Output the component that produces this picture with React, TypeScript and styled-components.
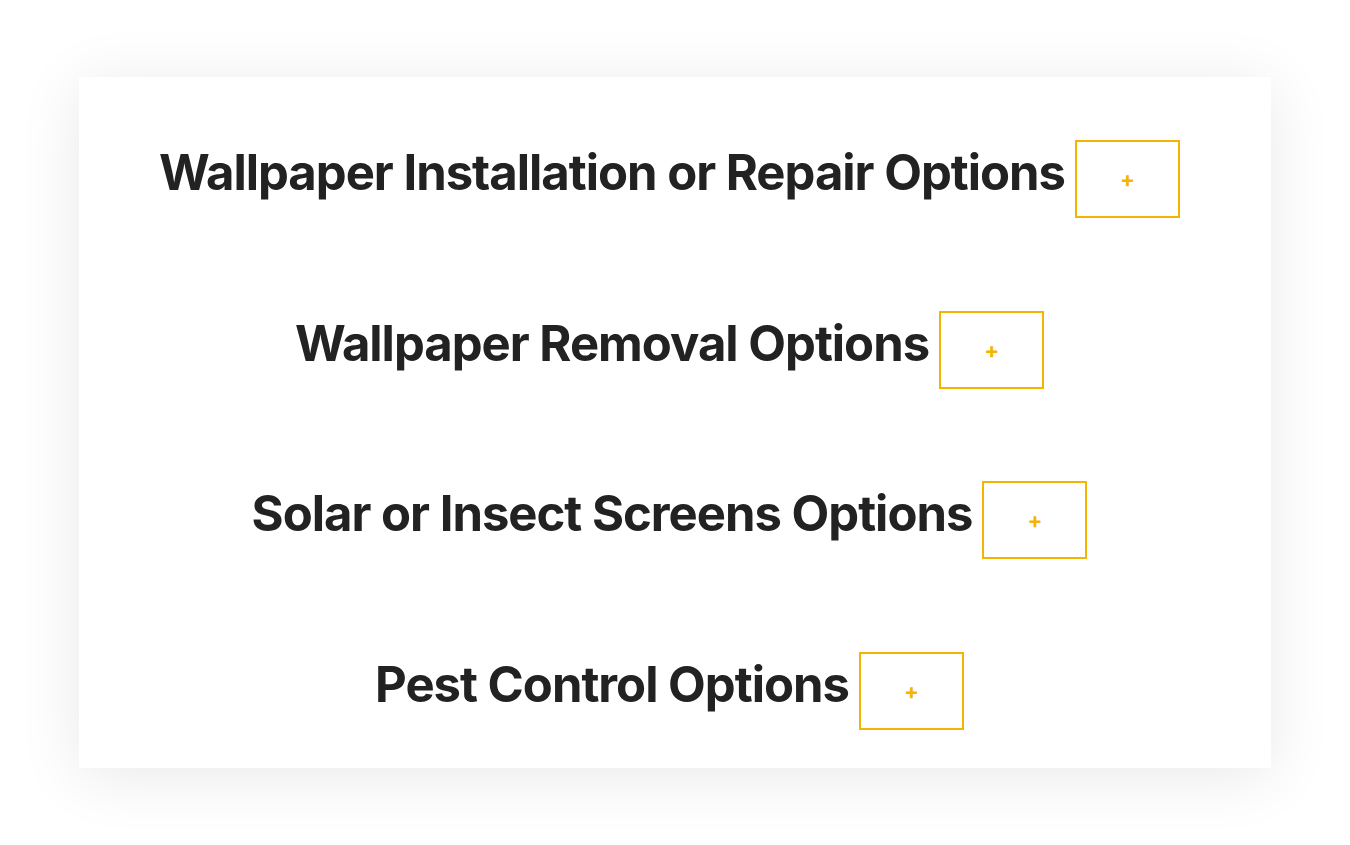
import styled, { createGlobalStyle } from 'styled-components';

const Global = createGlobalStyle({
  'html, body': { margin: 0, padding: 0, background: '#fff' },
  body: { width: 1350, height: 845, overflow: 'hidden' },
});

const Page = styled.div({
  width: 1350,
  height: 845,
  padding: '77px 79px',
  boxSizing: 'border-box',
});

const Card = styled.div({
  background: '#fff',
  height: 691,
  boxShadow: '0 8px 60px rgba(0, 0, 0, 0.09)',
  padding: '63px 11px 38px 0',
  boxSizing: 'border-box',
  display: 'flex',
  flexDirection: 'column',
  gap: 92.5,
});

const Row = styled.div({
  display: 'flex',
  alignItems: 'center',
  justifyContent: 'center',
  gap: 10,
  height: 78,
});

const Title = styled.h2({
  margin: 0,
  fontFamily: 'Inter, "Noto Sans", sans-serif',
  fontWeight: 700,
  fontSize: 49,
  lineHeight: '60px',
  paddingBottom: 12,
  color: '#222',
  letterSpacing: -1,
  fontVariantLigatures: 'none',
  whiteSpace: 'nowrap',
});

const Toggle = styled.button({
  width: 105,
  height: 78,
  boxSizing: 'border-box',
  border: '2px solid #f5b400',
  background: '#fff',
  color: '#f5b400',
  fontFamily: 'Inter, sans-serif',
  fontWeight: 700,
  fontSize: 22,
  padding: 0,
  cursor: 'pointer',
});

const items = [
  'Wallpaper Installation or Repair Options',
  'Wallpaper Removal Options',
  'Solar or Insect Screens Options',
  'Pest Control Options',
];

export default function App() {
  return (
    <Page>
      <Global />
      <Card>
        {items.map((t) => (
          <Row key={t}>
            <Title>{t}</Title>
            <Toggle>+</Toggle>
          </Row>
        ))}
      </Card>
    </Page>
  );
}
